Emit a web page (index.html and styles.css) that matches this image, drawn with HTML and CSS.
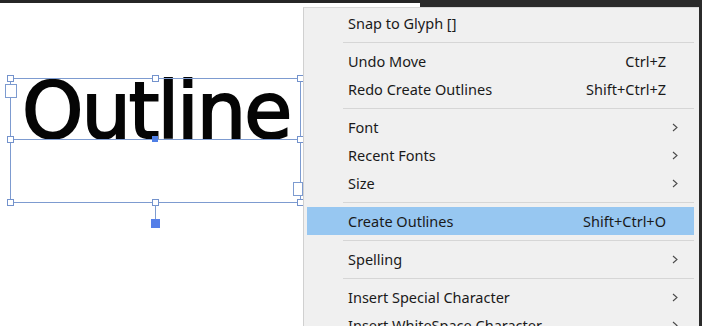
FILE: index.html
```html
<!DOCTYPE html>
<html>
<head>
<meta charset="utf-8">
<link rel="stylesheet" href="styles.css">
</head>
<body>
<div class="stage">
  <div class="frame-top"></div>
  <div class="frame-top-right"></div>
  <div class="frame-right"></div>

  <div class="canvas">
    <div class="word">Outline</div>
    <div class="bbox"></div>
    <div class="baseline"></div>
    <div class="port port-in"></div>
    <div class="port port-out"></div>
    <div class="handle" style="left:10px;top:78px"></div>
    <div class="handle" style="left:155px;top:78px"></div>
    <div class="handle" style="left:300px;top:78px"></div>
    <div class="handle" style="left:10px;top:139px"></div>
    <div class="handle" style="left:300px;top:139px"></div>
    <div class="handle" style="left:10px;top:202px"></div>
    <div class="handle" style="left:155px;top:202px"></div>
    <div class="handle" style="left:300px;top:202px"></div>
    <div class="center-dot"></div>
    <div class="rotate-stem"></div>
    <div class="rotate-knob"></div>
  </div>

  <div class="menu">
    <div class="item"><span class="label">Snap to Glyph []</span><span class="key"></span><span class="arrow"></span></div>
    <div class="sep"></div>
    <div class="item"><span class="label">Undo Move</span><span class="key">Ctrl+Z</span><span class="arrow"></span></div>
    <div class="item"><span class="label">Redo Create Outlines</span><span class="key">Shift+Ctrl+Z</span><span class="arrow"></span></div>
    <div class="sep"></div>
    <div class="item"><span class="label">Font</span><span class="key"></span><span class="arrow"><svg width="6" height="9" viewBox="0 0 6 9"><path d="M1 1 L5 4.5 L1 8" fill="none" stroke="#4a4a4a" stroke-width="1.1"/></svg></span></div>
    <div class="item"><span class="label">Recent Fonts</span><span class="key"></span><span class="arrow"><svg width="6" height="9" viewBox="0 0 6 9"><path d="M1 1 L5 4.5 L1 8" fill="none" stroke="#4a4a4a" stroke-width="1.1"/></svg></span></div>
    <div class="item"><span class="label">Size</span><span class="key"></span><span class="arrow"><svg width="6" height="9" viewBox="0 0 6 9"><path d="M1 1 L5 4.5 L1 8" fill="none" stroke="#4a4a4a" stroke-width="1.1"/></svg></span></div>
    <div class="sep"></div>
    <div class="item active"><span class="label">Create Outlines</span><span class="key">Shift+Ctrl+O</span><span class="arrow"></span></div>
    <div class="sep"></div>
    <div class="item"><span class="label">Spelling</span><span class="key"></span><span class="arrow"><svg width="6" height="9" viewBox="0 0 6 9"><path d="M1 1 L5 4.5 L1 8" fill="none" stroke="#4a4a4a" stroke-width="1.1"/></svg></span></div>
    <div class="sep"></div>
    <div class="item"><span class="label">Insert Special Character</span><span class="key"></span><span class="arrow"><svg width="6" height="9" viewBox="0 0 6 9"><path d="M1 1 L5 4.5 L1 8" fill="none" stroke="#4a4a4a" stroke-width="1.1"/></svg></span></div>
    <div class="item"><span class="label">Insert WhiteSpace Character</span><span class="key"></span><span class="arrow"><svg width="6" height="9" viewBox="0 0 6 9"><path d="M1 1 L5 4.5 L1 8" fill="none" stroke="#4a4a4a" stroke-width="1.1"/></svg></span></div>
  </div>
</div>
</body>
</html>
```

FILE: styles.css
```css
* { box-sizing: border-box; }
html, body { margin: 0; padding: 0; background: #fff; }
.stage {
  position: relative;
  width: 702px;
  height: 326px;
  overflow: hidden;
  background: #fff;
}
.frame-top {
  position: absolute; left: 0; top: 0; width: 702px; height: 3px;
  background: #262626;
}
.frame-top-right {
  position: absolute; left: 420px; top: 0; width: 282px; height: 7px;
  background: #2b2b2b;
}
.frame-right {
  position: absolute; left: 699px; top: 0; width: 3px; height: 326px;
  background: #2b2b2b;
}
.canvas { position: absolute; left: 0; top: 0; width: 303px; height: 326px; }
.word {
  position: absolute;
  left: 22px;
  top: 71px;
  font-family: "DejaVu Sans", sans-serif;
  font-size: 78px;
  line-height: 80px;
  letter-spacing: -2px;
  color: #050505;
  -webkit-text-stroke: 2px #050505;
  white-space: nowrap;
}
.bbox {
  position: absolute; left: 10px; top: 78px; width: 291px; height: 125px;
  border: 1px solid #7d9bd0;
}
.baseline {
  position: absolute; left: 13px; top: 139px; width: 284px; height: 1px;
  background: #7d9bd0;
}
.handle {
  position: absolute; width: 7px; height: 7px;
  margin-left: -3px; margin-top: -3px;
  background: #fff; border: 1px solid #7392cc;
}
.port {
  position: absolute; background: #fff; border: 1px solid #7d9bd0;
}
.port-in { left: 5px; top: 84px; width: 12px; height: 14px; }
.port-out { left: 293px; top: 182px; width: 10px; height: 14px; }
.center-dot {
  position: absolute; left: 152px; top: 136px; width: 6px; height: 6px;
  background: #4f7fe6;
}
.rotate-stem {
  position: absolute; left: 155px; top: 205px; width: 1px; height: 14px;
  background: #7d9bd0;
}
.rotate-knob {
  position: absolute; left: 151px; top: 219px; width: 9px; height: 9px;
  background: #557fe8;
}
.menu {
  position: absolute;
  left: 303px; top: 7px;
  width: 396px; height: 330px;
  background: #f0f0f0;
  border-left: 1px solid #d0d0d0;
  border-top: 1px solid #d8d8d8;
  padding: 1px 5px 0 3px;
  font-family: "Noto Sans", sans-serif;
  font-size: 14.5px;
  color: #1a1a1a;
}
.item {
  display: flex;
  align-items: center;
  height: 28px;
  padding-left: 41px;
}
.item.active { background: #97c7f1; }
.label { flex: 1; white-space: nowrap; }
.key { white-space: nowrap; }
.arrow {
  width: 28px; display: flex; align-items: center; padding-left: 6px;
}
.sep {
  height: 10px;
  margin-left: 36px;
  display: flex; flex-direction: column; justify-content: center;
}
.sep::before {
  content: ""; display: block; height: 1px; background: #d6d6d6;
}
```
